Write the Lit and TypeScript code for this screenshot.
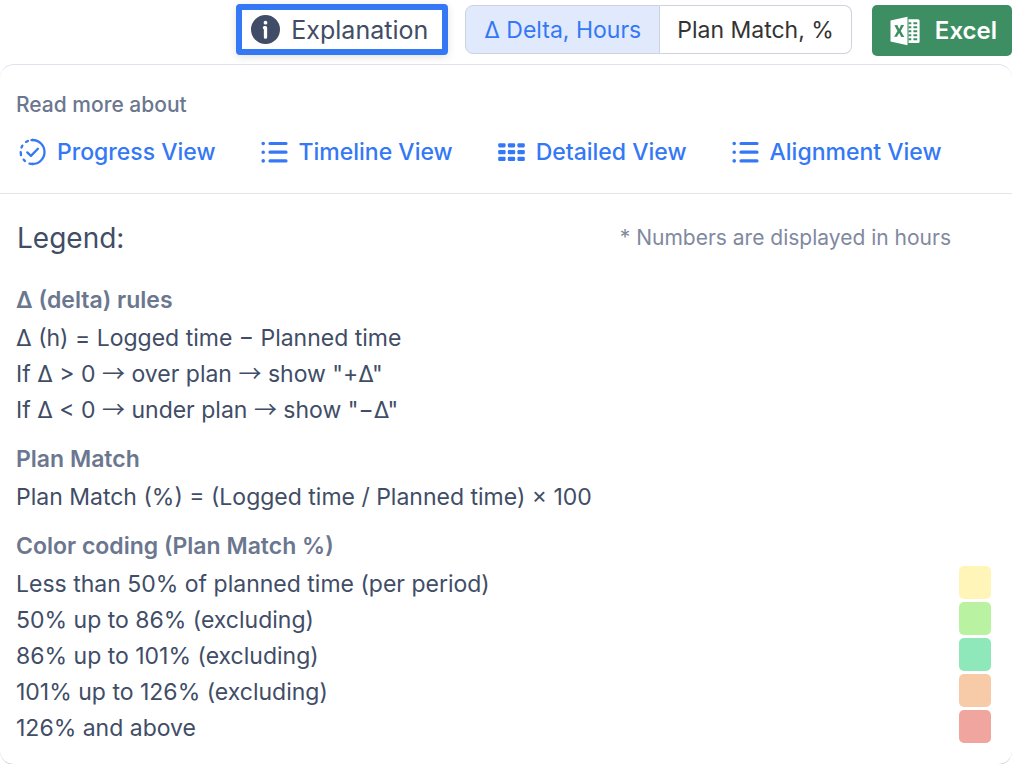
import { LitElement, html, css, svg } from "lit";
import { customElement, state } from "lit/decorators.js";

const infoIcon = html`<svg class="info" viewBox="0 0 28 28" aria-hidden="true">
  <circle cx="14" cy="14" r="14" fill="#414d66" />
  <circle cx="14" cy="7.4" r="1.8" fill="#fff" />
  <path d="M13 12.2h1v9.2" fill="none" stroke="#fff" stroke-width="3.2" stroke-linecap="round" stroke-linejoin="round" />
</svg>`;

const excelIcon = html`<svg class="excel-icon" viewBox="0 0 30 30" aria-hidden="true">
  <path fill="#fff" fill-rule="evenodd" d="M.5 4.6 17.5.8v28.4L.5 25.4zM4.4 9.2 7.5 15l-3.4 5.8h2.9l2.1-3.9 2.2 4.1h3L10.8 15l3.3-6.1h-3l-1.9 4-1.9-3.8z" />
  <path fill="#fff" d="M18.5 3.2H28a1.6 1.6 0 0 1 1.6 1.6v20.6A1.6 1.6 0 0 1 28 27h-9.5z" />
  <path stroke="#3d8f63" stroke-width="2" fill="none" d="M18.5 7.2h2.8M23.4 7.2h3.8M18.5 11.2h2.8M23.4 11.2h3.8M18.5 15.2h2.8M23.4 15.2h3.8M18.5 19.2h2.8M23.4 19.2h3.8M18.5 23.2h2.8M23.4 23.2h3.8" />
</svg>`;

const glyphs = {
  progress: svg`<g fill="none" stroke="currentColor" stroke-width="2.3" stroke-linecap="round" stroke-linejoin="round">
    <path d="M13.5 2a12 12 0 0 1 0 24" />
    <path d="M8.9 2.9 7 3.9M3.4 7.6l-.9 1.9M1.7 14.2l.3 3M4.6 21.6l1.3 1.5" />
    <path d="M13.5 26a12 12 0 0 1-3-.4M13.5 2a12 12 0 0 0-1 .05" />
    <path d="m8.3 14.4 3.6 3.5 7-7.2" />
  </g>`,
  list: svg`<g fill="none" stroke="currentColor" stroke-linecap="round">
    <path stroke-width="3.2" d="M9 5.5h16M9 14.2h16M9 22.9h16" />
    <path stroke-width="3.6" d="M2.2 5.5h.01M2.2 14.2h.01M2.2 22.9h.01" />
  </g>`,
  grid: svg`<g fill="currentColor">
    ${[5.2, 12, 18.8].map((y) => [0.2, 9.8, 19.4].map((x) => svg`<rect x=${x} y=${y} width="7.4" height="4.2" rx="1.3" />`))}
  </g>`,
};

const links: { label: string; icon: keyof typeof glyphs }[] = [
  { label: "Progress View", icon: "progress" },
  { label: "Timeline View", icon: "list" },
  { label: "Detailed View", icon: "grid" },
  { label: "Alignment View", icon: "list" },
];

const bands = [
  { label: "Less than 50% of planned time (per period)", color: "#fff5b8" },
  { label: "50% up to 86% (excluding)", color: "#b9f2a1" },
  { label: "86% up to 101% (excluding)", color: "#8fe8b9" },
  { label: "101% up to 126% (excluding)", color: "#f7cba8" },
  { label: "126% and above", color: "#f0a59e" },
];

const arrow = html`<span class="arrow">→</span>`;

@customElement("app-root")
export class AppRoot extends LitElement {
  @state() private mode: "delta" | "match" = "delta";

  static styles = css`
    :host {
      display: block;
      background: #fff;
      color: #414d66;
      font-family: Inter, "Liberation Sans", sans-serif;
      font-size: 23px;
      line-height: 36px;
    }
    * {
      box-sizing: border-box;
    }
    h2,
    h3,
    p,
    ul {
      margin: 0;
      padding: 0;
    }
    ul {
      list-style: none;
    }
    button {
      font: inherit;
      margin: 0;
      cursor: pointer;
      white-space: nowrap;
    }
    svg {
      display: block;
      flex: none;
    }
    .toolbar {
      display: flex;
      justify-content: flex-end;
      align-items: flex-start;
      padding: 4px 0 8px;
    }
    .explanation {
      display: flex;
      align-items: center;
      gap: 11px;
      height: 51px;
      padding: 0 14px 0 9px;
      margin-right: 17px;
      border: 6px solid #3478f6;
      border-radius: 4px;
      background: #fff;
      color: #414d66;
      font-size: 25px;
      box-shadow: 0 2px 8px rgb(0 0 0 / 12%);
    }
    .info {
      width: 29px;
      height: 29px;
    }
    .segmented {
      display: flex;
      height: 49px;
      margin: 1px 20px 0 0;
    }
    .segment {
      padding: 0 18px;
      border: 1px solid #cdd2de;
      background: #fff;
      color: #333;
    }
    .segment:first-child {
      border-radius: 8px 0 0 8px;
    }
    .segment:last-child {
      padding: 0 17px;
      border-left: 0;
      border-radius: 0 8px 8px 0;
    }
    .segment[aria-pressed="true"] {
      background: #e1eafc;
      color: #3478f6;
    }
    .excel {
      display: flex;
      align-items: center;
      gap: 15px;
      height: 51px;
      margin-top: 1px;
      padding: 0 15px 0 18px;
      border: 0;
      border-radius: 5px;
      background: #3d8f63;
      color: #fff;
      font-size: 24px;
      font-weight: 600;
    }
    .excel-icon {
      width: 30px;
      height: 30px;
    }
    .panel {
      border: 1px solid #e1e3ec;
      border-width: 1px 0;
      border-bottom-color: #c6c8d4;
      border-radius: 14px;
    }
    .more {
      padding: 24px 16px 23px;
      border-bottom: 1px solid #e4e5ea;
    }
    .more-title {
      color: #6b778f;
      font-size: 21px;
      font-weight: 500;
      line-height: 32px;
    }
    .links {
      display: flex;
      flex-wrap: wrap;
      column-gap: 43px;
      margin-top: 13px;
      padding-left: 1px;
    }
    .link {
      display: flex;
      align-items: center;
      gap: 10px;
      padding-left: 2px;
      color: #3478f6;
      font-weight: 500;
      text-decoration: none;
      white-space: nowrap;
    }
    .link-icon {
      width: 28px;
      height: 28px;
    }
    .legend {
      padding: 24px 21px 18px 16px;
    }
    .legend-head {
      display: flex;
      justify-content: space-between;
      align-items: center;
      height: 40px;
      padding: 0 40px 0 1px;
      margin-bottom: 24px;
    }
    .legend-title {
      font-size: 28px;
      font-weight: 400;
    }
    .note {
      color: #7f89a0;
      font-size: 21px;
    }
    .section + .section {
      margin-top: 13px;
    }
    .section-title {
      color: #6b778f;
      font-size: 23px;
      font-weight: 600;
      line-height: 36px;
      margin-bottom: 2px;
    }
    .arrow {
      font-family: "Noto Sans CJK SC", sans-serif;
      line-height: 1;
    }
    .band {
      display: flex;
      justify-content: space-between;
      align-items: flex-start;
    }
    .swatch {
      width: 32px;
      height: 33px;
      border-radius: 5px;
    }
  `;

  render() {
    return html`
      <header class="toolbar">
        <button class="explanation" type="button">${infoIcon}<span>Explanation</span></button>
        <div class="segmented" role="group" aria-label="Display mode">
          <button class="segment" type="button" aria-pressed=${this.mode === "delta"} @click=${() => (this.mode = "delta")}>Δ Delta, Hours</button>
          <button class="segment" type="button" aria-pressed=${this.mode === "match"} @click=${() => (this.mode = "match")}>Plan Match, %</button>
        </div>
        <button class="excel" type="button">${excelIcon}<span>Excel</span></button>
      </header>
      <main class="panel">
        <nav class="more">
          <p class="more-title">Read more about</p>
          <div class="links">
            ${links.map(
              (l) => html`<a class="link" href="#"><svg class="link-icon" viewBox="0 0 28 28" aria-hidden="true">${glyphs[l.icon]}</svg><span>${l.label}</span></a>`
            )}
          </div>
        </nav>
        <div class="legend">
          <div class="legend-head">
            <h2 class="legend-title">Legend:</h2>
            <p class="note">* Numbers are displayed in hours</p>
          </div>
          <section class="section">
            <h3 class="section-title">Δ (delta) rules</h3>
            <p>Δ (h) = Logged time − Planned time</p>
            <p>If Δ &gt; 0 ${arrow} over plan ${arrow} show "+Δ"</p>
            <p>If Δ &lt; 0 ${arrow} under plan ${arrow} show "−Δ"</p>
          </section>
          <section class="section">
            <h3 class="section-title">Plan Match</h3>
            <p>Plan Match (%) = (Logged time / Planned time) × 100</p>
          </section>
          <section class="section">
            <h3 class="section-title">Color coding (Plan Match %)</h3>
            <ul>
              ${bands.map(
                (b) => html`<li class="band"><span>${b.label}</span><span class="swatch" style="background:${b.color}"></span></li>`
              )}
            </ul>
          </section>
        </div>
      </main>
    `;
  }
}
